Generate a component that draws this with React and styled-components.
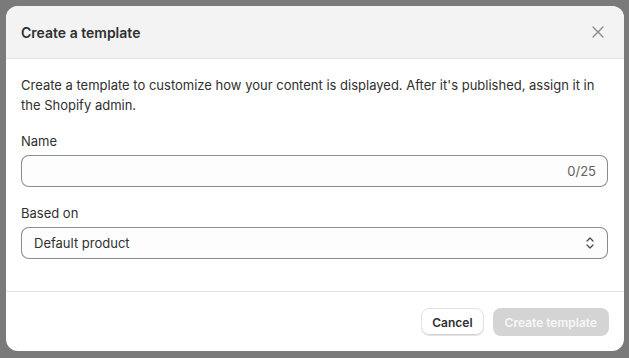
import React, { useState } from 'react';
import styled, { createGlobalStyle } from 'styled-components';

const GlobalStyle = createGlobalStyle`
  html, body {
    margin: 0;
    padding: 0;
    background: #7a7a7a;
    font-family: Inter, "Noto Sans", sans-serif;
    color: #303030;
  }
  * { box-sizing: border-box; }
`;

const Backdrop = styled.div`
  width: 629px;
  height: 358px;
  padding: 6px 5px 0 6px;
  background: #7a7a7a;
`;

const Modal = styled.div`
  width: 618px;
  height: 345px;
  background: #ffffff;
  border-radius: 12px;
  overflow: hidden;
  display: flex;
  flex-direction: column;
`;

const Header = styled.div`
  height: 53px;
  flex-shrink: 0;
  display: flex;
  align-items: center;
  justify-content: space-between;
  padding: 0 16px 0 15px;
  background: #f3f3f3;
  border-bottom: 1px solid #e3e3e3;
`;

const Title = styled.h2`
  margin: 0;
  font-size: 14px;
  font-weight: 600;
  color: #303030;
`;

const CloseButton = styled.button`
  border: 0;
  background: none;
  padding: 0;
  width: 20px;
  height: 20px;
  display: flex;
  align-items: center;
  justify-content: center;
  cursor: pointer;
`;

const Body = styled.div`
  padding: 16px 16px 32px 15px;
  display: flex;
  flex-direction: column;
  border-bottom: 1px solid #e3e3e3;
`;

const Intro = styled.p`
  margin: 0 0 16px;
  font-size: 13px;
  line-height: 20px;
  color: #303030;
`;

const Field = styled.div`
  display: flex;
  flex-direction: column;
  gap: 4px;
  margin-bottom: ${(p) => (p.$last ? '0' : '16px')};
`;

const Label = styled.label`
  font-size: 13px;
  line-height: 20px;
  color: #303030;
`;

const InputBox = styled.div`
  height: 32px;
  display: flex;
  align-items: center;
  padding: 0 11px 0 12px;
  border: 1px solid #8a8a8a;
  border-top-color: #898f94;
  border-radius: 8px;
  background: #fdfdfd;
`;

const TextInput = styled.input`
  flex: 1;
  border: 0;
  outline: none;
  background: transparent;
  font-family: inherit;
  font-size: 13px;
  color: #303030;
  padding: 0;
`;

const Counter = styled.span`
  font-size: 13px;
  color: #616161;
`;

const SelectText = styled.span`
  flex: 1;
  font-size: 13px;
  color: #303030;
`;

const Footer = styled.div`
  flex: 1;
  display: flex;
  justify-content: flex-end;
  align-items: flex-start;
  gap: 9px;
  padding: 16px 15px 0 16px;
`;

const Button = styled.button`
  height: 28px;
  padding: 0 ${(p) => (p.$primary ? '12px' : '10px')};
  border-radius: 8px;
  font-family: inherit;
  font-size: 12px;
  font-weight: 600;
  cursor: pointer;
  border: ${(p) => (p.$primary ? '0' : '1px solid #e3e3e3')};
  background: ${(p) => (p.$primary ? '#d4d4d4' : '#ffffff')};
  color: ${(p) => (p.$primary ? '#f7f7f7' : '#303030')};
  box-shadow: ${(p) => (p.$primary ? 'none' : 'inset 0 -1px 0 #d4d4d4')};
`;

function CloseIcon() {
  return (
    <svg width="14" height="14" viewBox="0 0 14 14" fill="none">
      <path d="M2 2L12 12M12 2L2 12" stroke="#8a8a8a" strokeWidth="1.4" strokeLinecap="round" />
    </svg>
  );
}

function SelectIcon() {
  return (
    <svg width="12" height="16" viewBox="0 0 12 16" fill="none">
      <path d="M3 6L6 3L9 6M3 10L6 13L9 10" stroke="#4a4a4a" strokeWidth="1.3" strokeLinecap="round" strokeLinejoin="round" />
    </svg>
  );
}

export default function App() {
  const [name, setName] = useState('');

  return (
    <>
      <GlobalStyle />
      <Backdrop>
        <Modal>
          <Header>
            <Title>Create a template</Title>
            <CloseButton aria-label="Close">
              <CloseIcon />
            </CloseButton>
          </Header>
          <Body>
            <Intro>
              Create a template to customize how your content is displayed. After it's published, assign it in the
              Shopify admin.
            </Intro>
            <Field>
              <Label>Name</Label>
              <InputBox>
                <TextInput value={name} maxLength={25} onChange={(e) => setName(e.target.value)} />
                <Counter>{name.length}/25</Counter>
              </InputBox>
            </Field>
            <Field $last>
              <Label>Based on</Label>
              <InputBox>
                <SelectText>Default product</SelectText>
                <SelectIcon />
              </InputBox>
            </Field>
          </Body>
          <Footer>
            <Button>Cancel</Button>
            <Button $primary disabled>Create template</Button>
          </Footer>
        </Modal>
      </Backdrop>
    </>
  );
}
